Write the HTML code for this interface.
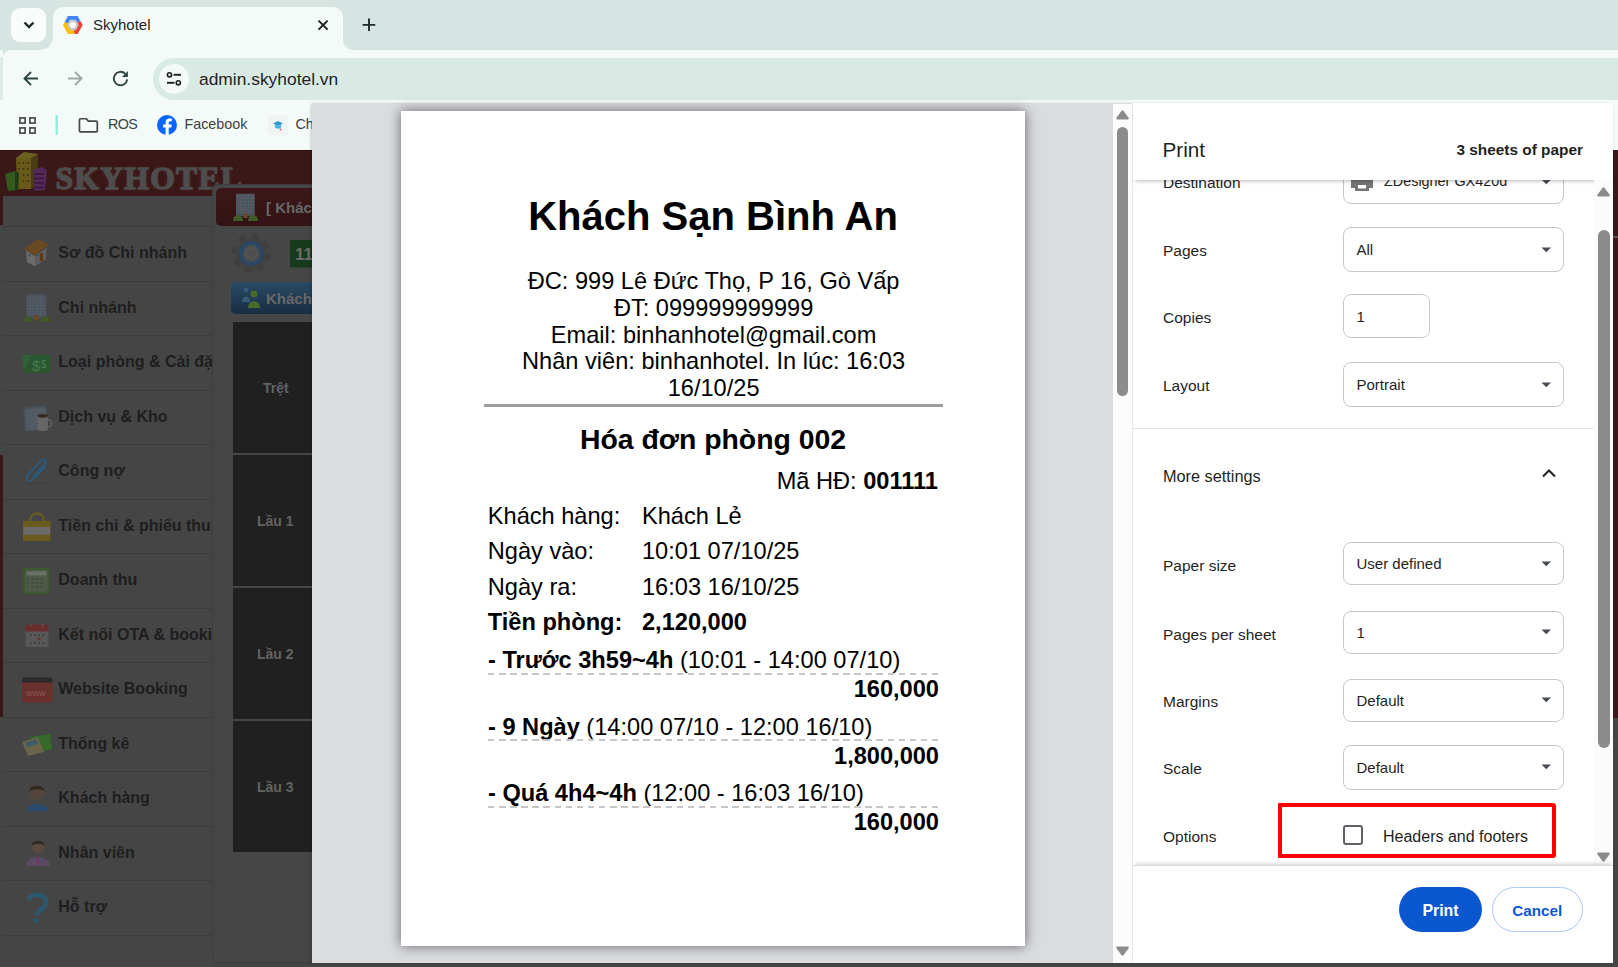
<!DOCTYPE html>
<html><head><meta charset="utf-8">
<style>
*{margin:0;padding:0;box-sizing:border-box}
html,body{width:1618px;height:967px;overflow:hidden;background:#444;font-family:"Liberation Sans",sans-serif}
.a{position:absolute}
svg{position:absolute;overflow:visible}
#tabstrip{left:0;top:0;width:1618px;height:50px;background:#d6e5e1}
#toolbar{left:0;top:50px;width:1618px;height:100px;background:#f4faf8}
#page{left:0;top:150px;width:1618px;height:817px;background:#444}
#dialog{left:312px;top:103px;width:1301px;height:860px;background:#dadce0;box-shadow:-2px 0 3px -1px rgba(0,0,0,.2)}
#paper{left:89px;top:8px;width:624px;height:835px;background:#fff;box-shadow:0 0 12px rgba(0,0,0,.55)}
#side{left:820px;top:0;width:481px;height:860px;background:#fff;border-left:1px solid #e8eaed}
.pt{font-family:"Liberation Sans",sans-serif;color:#000;white-space:nowrap}
.it{left:87px;font-size:23.6px;line-height:28px}
.am{left:0;width:538px;text-align:right;font-weight:bold;font-size:23.6px;line-height:28px}
.dl{left:87px;width:452px;height:2px;background:repeating-linear-gradient(90deg,#c6c6c6 0 6.4px,transparent 6.4px 11.1px)}
.sl{font-family:"Liberation Sans",sans-serif;color:#1f1f1f;white-space:nowrap}
.sel{border:1px solid #c7c7c7;border-radius:8px;background:#fff}
.ui{font-family:"Liberation Sans",sans-serif;color:#1f1f1f;white-space:nowrap}
</style></head><body>
<!-- ============ CHROME ============ -->
<div id="tabstrip" class="a">
  <div class="a" style="left:53px;top:7px;width:290px;height:43px;border-radius:10px 10px 0 0;background:#f4faf8"></div>
  <!-- tab feet -->
  <div class="a" style="left:38px;top:36px;width:15px;height:14px;background:#f4faf8"></div>
  <div class="a" style="left:25px;top:22px;width:28px;height:27.5px;border-radius:0 0 13px 0;background:#d6e5e1"></div>
  <div class="a" style="left:343px;top:40px;width:10px;height:10px;background:#f4faf8"></div>
  <div class="a" style="left:343px;top:30px;width:20px;height:20px;border-radius:0 0 0 10px;background:#d6e5e1"></div>
  <div class="a" style="left:11px;top:8px;width:35px;height:34px;border-radius:9px;background:#f8fcfb"></div>
  <svg style="left:0;top:0" width="60" height="50"><path d="M24.5 22.5 L29 27 L33.5 22.5" fill="none" stroke="#1f2a28" stroke-width="2.4"/></svg>
  <!-- favicon -->
  <svg style="left:0;top:0" width="100" height="50">
    <path d="M72.8 25 L64.5 22.2 L67.9 16.1 L77.6 16.1 L80.4 21 Z" fill="#4285f4"/>
    <path d="M72.8 25 L80.4 21 L82.8 25 L77.6 33.9 L74.5 33.9 Z" fill="#ea4335"/>
    <path d="M72.8 25 L74.5 33.9 L67.9 33.9 L63 25 L64.5 22.2 Z" fill="#fbbc04"/>
    <path d="M69.9 19.8 H75.7 L78.7 25 L75.7 30.2 H69.9 L67 25Z" fill="#c8c8c8"/>
    <circle cx="72.8" cy="25" r="3.1" fill="#fff"/>
  </svg>
  <span class="a ui" style="left:93px;top:16px;font-size:15px;color:#1f1f1f">Skyhotel</span>
  <svg style="left:0;top:0" width="400" height="50"><path d="M318.6 20.6 L327.6 29.6 M327.6 20.6 L318.6 29.6" stroke="#1f1f1f" stroke-width="2"/>
  <path d="M369 18.6 V31 M362.6 24.9 H375.3" stroke="#1f2a28" stroke-width="1.9"/></svg>
</div>
<div id="toolbar" class="a">
  <div class="a" style="left:0;top:7px;width:3px;height:43px;background:#dcebe7"></div>
  <div class="a" style="left:3px;top:0;width:9px;height:9px;background:#d6e5e1"></div>
  <div class="a" style="left:3px;top:0;width:20px;height:20px;border-radius:8px 0 0 0;background:#f4faf8"></div>
  <svg style="left:0;top:0" width="150" height="50">
    <path d="M38 28.5 H24.5 M31 22 L24.5 28.5 L31 35" fill="none" stroke="#2b4542" stroke-width="1.9"/>
    <path d="M68 28.5 H81.5 M75 22 L81.5 28.5 L75 35" fill="none" stroke="#9fa8a6" stroke-width="1.9"/>
    <path d="M127.2 29.3 A6.7 6.7 0 1 1 125.3 23.8" fill="none" stroke="#2b4542" stroke-width="1.9"/>
    <path d="M127.9 21.1 V27 H122 Z" fill="#2b4542"/>
  </svg>
  <div class="a" style="left:153px;top:8px;width:1500px;height:42px;border-radius:21px;background:#d9eae5"></div>
  <div class="a" style="left:159px;top:14px;width:30px;height:30px;border-radius:15px;background:#f4faf8"></div>
  <svg style="left:0;top:0" width="200" height="50">
    <circle cx="169.5" cy="24.8" r="2.1" fill="none" stroke="#1f1f1f" stroke-width="1.6"/>
    <path d="M173.6 24.8 H181" stroke="#1f1f1f" stroke-width="1.9"/>
    <circle cx="178.3" cy="32.8" r="2.1" fill="none" stroke="#1f1f1f" stroke-width="1.6"/>
    <path d="M167 32.8 H174.4" stroke="#1f1f1f" stroke-width="1.9"/>
  </svg>
  <span class="a ui" style="left:199px;top:19px;font-size:17.4px;color:#1f1f1f">admin.skyhotel.vn</span>
  <!-- bookmarks -->
  <svg style="left:0;top:53px" width="320" height="47">
    <g fill="none" stroke="#474747" stroke-width="1.65">
    <rect x="19.9" y="14.9" width="5.2" height="5.2"/><rect x="29.9" y="14.9" width="5.2" height="5.2"/>
    <rect x="19.9" y="24.9" width="5.2" height="5.2"/><rect x="29.9" y="24.9" width="5.2" height="5.2"/></g>
    <rect x="55.5" y="12" width="2.4" height="20" rx="1.2" fill="#8eeee0"/>
    <path d="M80.6 15.75 H86.4 L88.3 18.1 H96.2 Q97.3 18.1 97.3 19.2 V27.7 Q97.3 28.85 96.2 28.85 H80.6 Q79.45 28.85 79.45 27.7 V16.9 Q79.45 15.75 80.6 15.75 Z" fill="none" stroke="#474747" stroke-width="1.7" stroke-linejoin="round"/>
    <circle cx="167" cy="22" r="10" fill="#0866ff"/>
    <path d="M168.7 32 V24.6 H171.3 L171.7 21.6 H168.7 V19.8 C168.7 18.9 169 18.3 170.3 18.3 H171.8 V15.6 C171.4 15.5 170.4 15.4 169.4 15.4 C167.2 15.4 165.6 16.8 165.6 19.3 V21.6 H163.1 V24.6 H165.6 V32 Z" fill="#fff"/>
    <rect x="268" y="12" width="20" height="20" rx="3" fill="#eff4f3"/>
    <path d="M273 20.5 L278 18 L283 20.5 L278 23Z" fill="#2a9ad0"/>
    <path d="M275 21.8 V24.5 C276.5 26 279.5 26 281 24.5 V21.8 L278 23.3Z" fill="#3ab4e0"/>
    <circle cx="280.5" cy="26.5" r="0.9" fill="#c55"/>
  </svg>
  <span class="a ui" style="left:108px;top:66px;font-size:14.3px;letter-spacing:-0.6px;color:#3c4043">ROS</span>
  <span class="a ui" style="left:184.5px;top:66px;font-size:14.3px;color:#3c4043">Facebook</span>
  <span class="a ui" style="left:295.5px;top:66px;font-size:14.3px;color:#3c4043">Ch</span>
</div>
<!-- ============ PAGE BEHIND ============ -->
<div id="page" class="a">
  <div class="a" style="left:0;top:1px;width:1618px;height:45px;background:#3a1718"></div>
  <div class="a" style="left:0;top:0;width:1618px;height:1px;background:#2a0e0e"></div>
  <!-- left strip -->
  <div class="a" style="left:0;top:46px;width:3px;height:771px;background:#454545"></div>
  <div class="a" style="left:0;top:46px;width:3px;height:29px;background:#3a1718"></div>
  <div class="a" style="left:0;top:305px;width:3px;height:262px;background:#3a1718"></div>
  <div class="a" style="left:1613px;top:0;width:5px;height:568px;background:#3a1718"></div>
  <div class="a" style="left:1613px;top:86px;width:5px;height:2px;background:#555"></div>
  <!-- logo buildings -->
  <svg style="left:0;top:0" width="60" height="46">
    <path d="M16 8 L31 8 L31 39 L17 39Z" fill="#6a5a1a"/>
    <path d="M31 8 L38 4 L37 36 L31 39Z" fill="#4a3d14"/>
    <path d="M16 8 L24 2 L38 4 L31 8Z" fill="#6e6222"/>
    <g fill="#3e3510"><circle cx="19" cy="13" r="1"/><circle cx="23.5" cy="13" r="1"/><circle cx="28" cy="13" r="1"/><circle cx="19" cy="19" r="1"/><circle cx="23.5" cy="19" r="1"/><circle cx="28" cy="19" r="1"/><circle cx="23.5" cy="25" r="1"/><circle cx="28" cy="25" r="1"/><circle cx="23.5" cy="31" r="1"/><circle cx="28" cy="31" r="1"/></g>
    <path d="M5 24 L15 21 L19 23 L18 40 L8 41Z" fill="#335a1c"/>
    <path d="M15 21 L19 23 L18 40 L15 41Z" fill="#1f3a14"/>
    <path d="M33 20 L41 17 L47 20 L45 40 L34 41Z" fill="#55295a"/>
    <g stroke="#351a3a" stroke-width="1.6"><path d="M34 24 H44 M34 28.5 H44 M34 33 H44 M34 37.5 H44"/></g>
  </svg>
  <span class="a" style="left:55.5px;top:10.5px;font:bold 31.6px 'Liberation Serif',serif;color:#4d4d4d;letter-spacing:1.3px;-webkit-text-stroke:1.3px #4d4d4d;text-shadow:0 0 4px #5a2a2a">SKYHOTEL<span style="font-size:20px">.</span></span>
  <!-- sidebar -->
  <div class="a" style="left:3px;top:46px;width:209px;height:771px;background:#454545;overflow:hidden" id="sb">
    <div class="a" style="left:0;top:30px;width:209px;height:1px;background:#3c3c3c"></div>
    <div class="a" style="left:0;top:85px;width:209px;height:1px;background:#3c3c3c"></div>
    <div class="a" style="left:0;top:139px;width:209px;height:1px;background:#3c3c3c"></div>
    <div class="a" style="left:0;top:194px;width:209px;height:1px;background:#3c3c3c"></div>
    <div class="a" style="left:0;top:248px;width:209px;height:1px;background:#3c3c3c"></div>
    <div class="a" style="left:0;top:303px;width:209px;height:1px;background:#3c3c3c"></div>
    <div class="a" style="left:0;top:357px;width:209px;height:1px;background:#3c3c3c"></div>
    <div class="a" style="left:0;top:412px;width:209px;height:1px;background:#3c3c3c"></div>
    <div class="a" style="left:0;top:466px;width:209px;height:1px;background:#3c3c3c"></div>
    <div class="a" style="left:0;top:521px;width:209px;height:1px;background:#3c3c3c"></div>
    <div class="a" style="left:0;top:575px;width:209px;height:1px;background:#3c3c3c"></div>
    <div class="a" style="left:0;top:630px;width:209px;height:1px;background:#3c3c3c"></div>
    <div class="a" style="left:0;top:684px;width:209px;height:1px;background:#3c3c3c"></div>
    <div class="a" style="left:0;top:739px;width:209px;height:1px;background:#3c3c3c"></div>
    <div class="a" style="left:0;top:30px;font:bold 16px 'Liberation Sans',sans-serif;color:#1e1e1e;white-space:nowrap;line-height:54.5px">
      <div style="padding-left:55.3px;height:54.5px">Sơ đồ Chi nhánh</div>
      <div style="padding-left:55.3px;height:54.5px">Chi nhánh</div>
      <div style="padding-left:55.3px;height:54.5px">Loại phòng &amp; Cài đặt</div>
      <div style="padding-left:55.3px;height:54.5px">Dịch vụ &amp; Kho</div>
      <div style="padding-left:55.3px;height:54.5px">Công nợ</div>
      <div style="padding-left:55.3px;height:54.5px">Tiền chi &amp; phiếu thu</div>
      <div style="padding-left:55.3px;height:54.5px">Doanh thu</div>
      <div style="padding-left:55.3px;height:54.5px">Kết nối OTA &amp; booking</div>
      <div style="padding-left:55.3px;height:54.5px">Website Booking</div>
      <div style="padding-left:55.3px;height:54.5px">Thống kê</div>
      <div style="padding-left:55.3px;height:54.5px">Khách hàng</div>
      <div style="padding-left:55.3px;height:54.5px">Nhân viên</div>
      <div style="padding-left:55.3px;height:54.5px">Hỗ trợ</div>
    </div>
    <!-- icons -->
    <svg style="left:-3px;top:0" width="60" height="771">
      <g transform="translate(0,56.3)"><path d="M26 -2 L35 4 L35 14 L27 10Z" fill="#6c6c6c"/><path d="M35 4 L47 -5 L46 7 L35 14Z" fill="#5e5e5e"/><rect x="40" y="1" width="3" height="8" fill="#5a3a1a"/><path d="M24 -3.3 L38 -13.3 L48.9 -7.8 L35 3.4Z" fill="#6a4820"/><path d="M28 2 h3 v2 h-3z M37 2 h3 v2 h-3z" fill="#3a5a6a"/></g>
      <g transform="translate(0,110.8)"><rect x="26.4" y="-12.5" width="20" height="24" fill="#4a525c"/><path d="M27.5 -11 V9" stroke="#5a626c" stroke-width="0.6"/><path d="M30.1 -11 V9" stroke="#5a626c" stroke-width="0.6"/><path d="M32.7 -11 V9" stroke="#5a626c" stroke-width="0.6"/><path d="M35.3 -11 V9" stroke="#5a626c" stroke-width="0.6"/><path d="M37.9 -11 V9" stroke="#5a626c" stroke-width="0.6"/><path d="M40.5 -11 V9" stroke="#5a626c" stroke-width="0.6"/><path d="M43.1 -11 V9" stroke="#5a626c" stroke-width="0.6"/><path d="M26.8 -9.5 H46" stroke="#5a626c" stroke-width="0.6"/><path d="M26.8 -6.7 H46" stroke="#5a626c" stroke-width="0.6"/><path d="M26.8 -3.9 H46" stroke="#5a626c" stroke-width="0.6"/><path d="M26.8 -1.1 H46" stroke="#5a626c" stroke-width="0.6"/><path d="M26.8 1.7 H46" stroke="#5a626c" stroke-width="0.6"/><path d="M26.8 4.5 H46" stroke="#5a626c" stroke-width="0.6"/><path d="M26.8 7.3 H46" stroke="#5a626c" stroke-width="0.6"/><rect x="34.5" y="8" width="4" height="5.5" fill="#6a4a24"/><path d="M23.5 15 C23.5 8 33 8 33 15Z" fill="#3e5a26"/><path d="M40.5 15 C40.5 8 50.5 8 50.5 15Z" fill="#3e5a26"/></g>
      <g transform="translate(0,165.3)"><path d="M22.2 -6.5 L50.7 -6.5 L49.5 11.5 L24 11.5Z" fill="#28562e"/><path d="M22.2 -6.5 L34 -6.5 C28 -2 26 4 24 11.5Z" fill="#33603a"/><text x="32" y="9.5" font-size="15" fill="#4c7a52" font-family="Liberation Sans">$</text><text x="41" y="7" font-size="10" fill="#4c7a52" font-family="Liberation Sans">$</text></g>
      <g transform="translate(0,219.9)"><path d="M23 -8 L44 -11 L46 12 L25 15.6Z" fill="#48505a"/><path d="M25 -6 L46 -9 L48 12 L27 15Z" fill="#525a64"/><path d="M48 4 C53 4 53 11 48 11" fill="none" stroke="#5e5e5e" stroke-width="1.6"/><path d="M37.5 0 V13 C37.5 16 48 16 48 13 V0Z" fill="#666"/><ellipse cx="42.75" cy="0" rx="5.25" ry="1.8" fill="#3a2a22"/></g>
      <g transform="translate(0,274.4)"><path d="M33 7 L45 -6 C48 -9.5 44 -12.5 41 -9.5 L28 4.5 C24 9 29 13 33 9 L46 -4.5" fill="none" stroke="#2a5a7e" stroke-width="1.8"/><path d="M26 13 H48" stroke="#3e3e3e" stroke-width="1.2"/></g>
      <g transform="translate(0,328.9)"><path d="M30 -4 C30 -14 44 -14 44 -4" fill="none" stroke="#6b5a1e" stroke-width="2.2"/><rect x="23" y="-4" width="27.5" height="20" fill="#6b5a1e"/><rect x="23.5" y="2" width="26.5" height="8" fill="#6a6a66"/></g>
      <g transform="translate(0,383.4)"><rect x="23.3" y="-11.5" width="26.3" height="25.8" rx="1.5" fill="#3d5a2c"/><rect x="25.3" y="-9.5" width="22.3" height="21.8" fill="#505a4a"/><rect x="26.5" y="-8" width="20" height="4" fill="#6a7266"/><g fill="#44503e"><rect x="26.5" y="-1.5" width="3" height="2"/><rect x="31" y="-1.5" width="3" height="2"/><rect x="35.5" y="-1.5" width="3" height="2"/><rect x="40" y="-1.5" width="3" height="2"/><rect x="26.5" y="2.5" width="3" height="2"/><rect x="31" y="2.5" width="3" height="2"/><rect x="35.5" y="2.5" width="3" height="2"/><rect x="40" y="2.5" width="3" height="2"/><rect x="26.5" y="6.5" width="3" height="2"/><rect x="31" y="6.5" width="3" height="2"/><rect x="35.5" y="6.5" width="3" height="2"/><rect x="40" y="6.5" width="3" height="2"/></g></g>
      <g transform="translate(0,437.9)"><rect x="25.5" y="-9" width="23" height="22" rx="1.5" fill="#585858"/><path d="M25.3 -6.5 Q25.3 -9.3 28 -9.3 H46 Q48.7 -9.3 48.7 -6.5 V-2.5 H25.3Z" fill="#6a2c2c"/><g fill="#3e3e3e"><circle cx="31" cy="1" r="1"/><circle cx="35" cy="1" r="1"/><circle cx="39" cy="1" r="1"/><circle cx="43" cy="1" r="1"/><circle cx="31" cy="9" r="1"/><circle cx="35" cy="9" r="1"/><circle cx="39" cy="9" r="1"/><circle cx="43" cy="9" r="1"/></g><circle cx="39" cy="5" r="1.3" fill="#7a2a2a"/><path d="M31 -11 V-7 M43 -11 V-7" stroke="#5a5a5a" stroke-width="1.2"/></g>
      <g transform="translate(0,492.5)"><rect x="22" y="-11" width="30.5" height="25" rx="3" fill="#6a302c"/><path d="M22 -8 Q22 -11 25 -11 H49.5 Q52.5 -11 52.5 -8 V-6 H22Z" fill="#2a2a2a"/><text x="26" y="7" font-size="9" fill="#8a5a56" font-family="Liberation Sans">www</text></g>
      <g transform="translate(0,547.0)"><path d="M30 -6 L50 -9 L52 6 L36 11Z" fill="#356a2a"/><path d="M22 -1 L38 -6 L44 9 L28 13Z" fill="#6a6448"/><path d="M25 0 L36 -3.5 L38 1 L27 4Z" fill="#3a5a6a"/></g>
      <g transform="translate(0,601.5)"><path d="M26 14 C26 4 49 4 49 14Z" fill="#2a4a6a"/><circle cx="37" cy="-5" r="7.3" fill="#54463c"/><path d="M29.5 -6 C29.5 -14 44.5 -14 44.5 -6 C42 -9 33 -9 29.5 -6Z" fill="#33291f"/></g>
      <g transform="translate(0,656.0)"><path d="M26 14 C26 2 50 2 50 14Z" fill="#5a4a66"/><path d="M36 4 L38 4 L39 13 L36 13Z" fill="#6a3a5a"/><circle cx="38" cy="-5" r="6.5" fill="#5a4a40"/><path d="M31.5 -6 C31.5 -13 44.5 -13 44.5 -6 C42 -9 34 -9 31.5 -6Z" fill="#33291f"/></g>
      <g transform="translate(0,710.5)"><path d="M29 -6 C29 -14 47 -14 46 -4 C45 3 38 3 37 9" fill="none" stroke="#2a5a70" stroke-width="4.5"/><circle cx="36" cy="14" r="2.5" fill="#2a5a70"/></g>
    </svg>
  </div>
  
  <!-- content panel -->
  <div class="a" style="left:212px;top:34px;width:1401px;height:779px;background:#464646;border:1px solid #3c3c3c;border-radius:5px 0 0 6px"></div>
  <div class="a" style="left:216px;top:38px;width:200px;height:38px;border-radius:5px;background:linear-gradient(#3b1719,#331315)"></div>
  <svg style="left:0;top:0" width="320" height="720">
    <rect x="236" y="43.7" width="18.7" height="22.5" fill="#4a525c"/><path d="M238.0 44 V64" stroke="#5a626c" stroke-width="0.6"/><path d="M240.6 44 V64" stroke="#5a626c" stroke-width="0.6"/><path d="M243.2 44 V64" stroke="#5a626c" stroke-width="0.6"/><path d="M245.8 44 V64" stroke="#5a626c" stroke-width="0.6"/><path d="M248.4 44 V64" stroke="#5a626c" stroke-width="0.6"/><path d="M251.0 44 V64" stroke="#5a626c" stroke-width="0.6"/><path d="M253.6 44 V64" stroke="#5a626c" stroke-width="0.6"/><path d="M236.5 46.0 H254.5" stroke="#5a626c" stroke-width="0.6"/><path d="M236.5 48.8 H254.5" stroke="#5a626c" stroke-width="0.6"/><path d="M236.5 51.6 H254.5" stroke="#5a626c" stroke-width="0.6"/><path d="M236.5 54.4 H254.5" stroke="#5a626c" stroke-width="0.6"/><path d="M236.5 57.2 H254.5" stroke="#5a626c" stroke-width="0.6"/><path d="M236.5 60.0 H254.5" stroke="#5a626c" stroke-width="0.6"/><path d="M236.5 62.8 H254.5" stroke="#5a626c" stroke-width="0.6"/><rect x="243.5" y="63" width="4" height="5" fill="#6a4a24"/><path d="M233 71 C233 63 243 63 243 71Z" fill="#3e5a26"/><path d="M248 71 C248 63 258 63 258 71Z" fill="#3e5a26"/>
    <circle cx="251.4" cy="103.5" r="17" fill="none" stroke="#3e3e3e" stroke-width="5" stroke-dasharray="7.3 6"/>
    <circle cx="251.4" cy="103.5" r="15" fill="#404040"/>
    <circle cx="251.4" cy="103.5" r="12.5" fill="#2a4866"/>
    <circle cx="251.4" cy="103.5" r="8.5" fill="#4e4e4e"/>
    <circle cx="251.4" cy="103.5" r="5" fill="none" stroke="#5a5a5a" stroke-width="1"/>
    <rect x="290" y="90" width="30" height="27.5" fill="#173a1c"/>
    <defs><linearGradient id="bb" x1="0" y1="0" x2="0" y2="1"><stop offset="0" stop-color="#2a4a64"/><stop offset="1" stop-color="#182e44"/></linearGradient></defs><rect x="231" y="132" width="100" height="32" rx="5" fill="url(#bb)"/>
    <circle cx="246" cy="140" r="2.3" fill="#3a5a7a"/><path d="M242 152 C242 145 250 145 250 152Z" fill="#3a5a7a"/><circle cx="254" cy="144" r="3.5" fill="#4a6a2a"/><path d="M248 158 C248 149 260 149 260 158Z" fill="#4a6a2a"/>
  </svg>
  <span class="a" style="left:266px;top:49px;font:bold 15px 'Liberation Sans',sans-serif;color:#686868">[ Khách</span>
  <span class="a" style="left:295px;top:95px;font:bold 17px 'Liberation Sans',sans-serif;color:#6a6a6a">11</span>
  <span class="a" style="left:266px;top:140px;font:bold 15px 'Liberation Sans',sans-serif;color:#686868">Khách</span>
  <div class="a" style="left:233px;top:172px;width:100px;height:130.5px;background:#202020"></div>
  <div class="a" style="left:233px;top:305px;width:100px;height:130.5px;background:#202020"></div>
  <div class="a" style="left:233px;top:438px;width:100px;height:130.5px;background:#202020"></div>
  <div class="a" style="left:233px;top:571px;width:100px;height:130.5px;background:#202020"></div>
  <span class="a" style="left:263px;top:230px;font:bold 14px 'Liberation Sans',sans-serif;color:#636363">Trệt</span>
  <span class="a" style="left:257px;top:363px;font:bold 14px 'Liberation Sans',sans-serif;color:#636363">Lầu 1</span>
  <span class="a" style="left:257px;top:496px;font:bold 14px 'Liberation Sans',sans-serif;color:#636363">Lầu 2</span>
  <span class="a" style="left:257px;top:629px;font:bold 14px 'Liberation Sans',sans-serif;color:#636363">Lầu 3</span>
</div>
<!-- ============ DIALOG ============ -->
<div id="dialog" class="a">
  <div id="paper" class="a">
    <div class="a pt" style="left:0;top:82px;width:624px;text-align:center;font-weight:bold;font-size:40px;line-height:46px">Khách Sạn Bình An</div>
    <div class="a pt" style="left:0.6px;top:157.4px;width:624px;text-align:center;font-size:23.6px;line-height:26.65px">ĐC: 999 Lê Đức Thọ, P 16, Gò Vấp<br>ĐT: 099999999999<br>Email: binhanhotel@gmail.com<br>Nhân viên: binhanhotel. In lúc: 16:03<br>16/10/25</div>
    <div class="a" style="left:83px;top:293px;width:459px;height:2.8px;background:#9c9c9c"></div>
    <div class="a pt" style="left:0;top:311px;width:624px;text-align:center;font-weight:bold;font-size:28.4px;line-height:34px">Hóa đơn phòng 002</div>
    <div class="a pt" style="left:0;top:356px;width:537px;text-align:right;font-size:23.6px;line-height:28px">Mã HĐ: <b>001111</b></div>
    <div class="a pt" style="left:86.8px;top:387.5px;font-size:23.6px;line-height:35.55px">Khách hàng:<br>Ngày vào:<br>Ngày ra:<br><b>Tiền phòng:</b></div>
    <div class="a pt" style="left:241px;top:387.5px;font-size:23.6px;line-height:35.55px">Khách Lẻ<br>10:01 07/10/25<br>16:03 16/10/25<br><b>2,120,000</b></div>
    <div class="a pt it" style="top:535px"><b>- Trước 3h59~4h</b> (10:01 - 14:00 07/10)</div>
    <div class="a dl" style="top:562px"></div>
    <div class="a pt am" style="top:564px">160,000</div>
    <div class="a pt it" style="top:602px"><b>- 9 Ngày</b> (14:00 07/10 - 12:00 16/10)</div>
    <div class="a dl" style="top:628px"></div>
    <div class="a pt am" style="top:631px">1,800,000</div>
    <div class="a pt it" style="top:668px"><b>- Quá 4h4~4h</b> (12:00 - 16:03 16/10)</div>
    <div class="a dl" style="top:695px"></div>
    <div class="a pt am" style="top:697px">160,000</div>
  </div>
  <div id="side" class="a"></div>
</div>
<!-- SIDE START -->
<!-- side panel content -->
<div class="a sel" style="left:1343px;top:159.5px;width:221px;height:44.0px"></div>
<svg style="left:1541px;top:178.5px" width="11" height="6"><path d="M0.5 0.5 H10 L5.25 5.3Z" fill="#474c54"/></svg>
<svg style="left:1350.5px;top:176px" width="22" height="16"><path d="M4 0 H18 V4 H22 V12 H18 V15 H4 V12 H0 V4 H4Z M7 9 V12.5 H15 V9Z" fill="#757575" fill-rule="evenodd"/></svg>
<div class="a sl" style="left:1384px;top:172.5px;font-size:14.4px">ZDesigner GX420d</div>
<div class="a sl" style="left:1163px;top:174.0px;font-size:15.5px">Destination</div>
<div class="a sl" style="left:1163px;top:241.9px;font-size:15.5px">Pages</div>
<div class="a sel" style="left:1343px;top:227.3px;width:221px;height:44.3px"></div>
<div class="a sl" style="left:1356.5px;top:241.4px;font-size:15px">All</div>
<svg style="left:1541px;top:246.5px" width="11" height="6"><path d="M0.5 0.5 H10 L5.25 5.3Z" fill="#474c54"/></svg>
<div class="a sl" style="left:1163px;top:309.4px;font-size:15.5px">Copies</div>
<div class="a sel" style="left:1343px;top:294.0px;width:87px;height:44.4px"></div>
<div class="a sl" style="left:1356.5px;top:308.1px;font-size:15px">1</div>
<div class="a sl" style="left:1163px;top:377.4px;font-size:15.5px">Layout</div>
<div class="a sel" style="left:1343px;top:362.3px;width:221px;height:44.3px"></div>
<div class="a sl" style="left:1356.5px;top:376.4px;font-size:15px">Portrait</div>
<svg style="left:1541px;top:381.5px" width="11" height="6"><path d="M0.5 0.5 H10 L5.25 5.3Z" fill="#474c54"/></svg>
<div class="a" style="left:1133px;top:428px;width:461px;height:1px;background:#e3e3e3"></div>
<div class="a sl" style="left:1163px;top:467.4px;font-size:16.3px">More settings</div>
<svg style="left:1541px;top:467px" width="16" height="12"><path d="M2 9.5 L8 3.5 L14 9.5" fill="none" stroke="#1f1f1f" stroke-width="2"/></svg>
<div class="a sl" style="left:1163px;top:556.7px;font-size:15.5px">Paper size</div>
<div class="a sel" style="left:1343px;top:541.6px;width:221px;height:43.8px"></div>
<div class="a sl" style="left:1356.5px;top:555.4px;font-size:15px">User defined</div>
<svg style="left:1541px;top:560.5px" width="11" height="6"><path d="M0.5 0.5 H10 L5.25 5.3Z" fill="#474c54"/></svg>
<div class="a sl" style="left:1163px;top:625.5px;font-size:15.5px">Pages per sheet</div>
<div class="a sel" style="left:1343px;top:610.5px;width:221px;height:43.8px"></div>
<div class="a sl" style="left:1356.5px;top:624.3px;font-size:15px">1</div>
<svg style="left:1541px;top:629.4px" width="11" height="6"><path d="M0.5 0.5 H10 L5.25 5.3Z" fill="#474c54"/></svg>
<div class="a sl" style="left:1163px;top:693.4px;font-size:15.5px">Margins</div>
<div class="a sel" style="left:1343px;top:678.5px;width:221px;height:43.5px"></div>
<div class="a sl" style="left:1356.5px;top:692.2px;font-size:15px">Default</div>
<svg style="left:1541px;top:697.2px" width="11" height="6"><path d="M0.5 0.5 H10 L5.25 5.3Z" fill="#474c54"/></svg>
<div class="a sl" style="left:1163px;top:760.1px;font-size:15.5px">Scale</div>
<div class="a sel" style="left:1343px;top:745.2px;width:221px;height:44.4px"></div>
<div class="a sl" style="left:1356.5px;top:759.3px;font-size:15px">Default</div>
<svg style="left:1541px;top:764.4px" width="11" height="6"><path d="M0.5 0.5 H10 L5.25 5.3Z" fill="#474c54"/></svg>
<div class="a sl" style="left:1163px;top:827.9px;font-size:15.5px">Options</div>
<div class="a" style="left:1343px;top:825px;width:20px;height:20px;border:2px solid #5f6368;border-radius:3px"></div>
<div class="a sl" style="left:1383px;top:827.9px;font-size:16px">Headers and footers</div>
<div class="a" style="left:1278px;top:803.4px;width:277.5px;height:54.5px;border:4px solid #ff0000;border-radius:1px 3px 3px 1px"></div>
<div class="a" style="left:1133px;top:103.5px;width:480px;height:76.5px;background:#fff;box-shadow:0 3px 4px -2px rgba(0,0,0,.28)"></div>
<div class="a sl" style="left:1162.5px;top:137.5px;font-size:20.7px">Print</div>
<div class="a sl" style="left:1400px;top:141px;width:183px;text-align:right;font-size:15.4px;font-weight:bold">3 sheets of paper</div>
<div class="a" style="left:1594px;top:180px;width:19px;height:685px;background:#fbfbfb"></div>
<svg style="left:1597px;top:186.5px" width="13" height="10"><path d="M6.5 1.3 L11.7 8.3 H1.3Z" fill="#8b8b8b" stroke="#8b8b8b" stroke-linejoin="round" stroke-width="2.2"/></svg>
<svg style="left:1597px;top:852px" width="13" height="10"><path d="M6.5 8.6 L11.7 1.5 H1.3Z" fill="#8b8b8b" stroke="#8b8b8b" stroke-linejoin="round" stroke-width="2.2"/></svg>
<div class="a" style="left:1598px;top:230px;width:11.5px;height:518px;border-radius:6px;background:#8b8b8b"></div>
<div class="a" style="left:1133px;top:865px;width:480px;height:98px;background:#fff;border-top:1.5px solid #dcdcdc;box-shadow:0 -3px 4px -2px rgba(0,0,0,.18)"></div>
<div class="a" style="left:1399px;top:887px;width:83px;height:44.6px;border-radius:23px;background:#0b57d0"></div>
<div class="a sl" style="left:1399px;top:902px;width:83px;text-align:center;font-size:15.9px;font-weight:bold;color:#fff">Print</div>
<div class="a" style="left:1492px;top:887px;width:90.5px;height:44.6px;border-radius:23px;border:1px solid #a8c7fa;background:#fff"></div>
<div class="a sl" style="left:1492px;top:902px;width:90.5px;text-align:center;font-size:15.2px;font-weight:bold;color:#0b57d0">Cancel</div>
<div class="a" style="left:1113px;top:103.5px;width:19px;height:859.5px;background:#fcfcfc"></div>
<svg style="left:1116px;top:110px" width="13" height="10"><path d="M6.5 1.3 L11.7 8.3 H1.3Z" fill="#8b8b8b" stroke="#8b8b8b" stroke-linejoin="round" stroke-width="2.2"/></svg>
<svg style="left:1116px;top:946px" width="13" height="10"><path d="M6.5 8.6 L11.7 1.5 H1.3Z" fill="#8b8b8b" stroke="#8b8b8b" stroke-linejoin="round" stroke-width="2.2"/></svg>
<div class="a" style="left:1117px;top:127px;width:11px;height:269px;border-radius:6px;background:#8b8b8b"></div>
<!-- SIDE END -->
</body></html>
